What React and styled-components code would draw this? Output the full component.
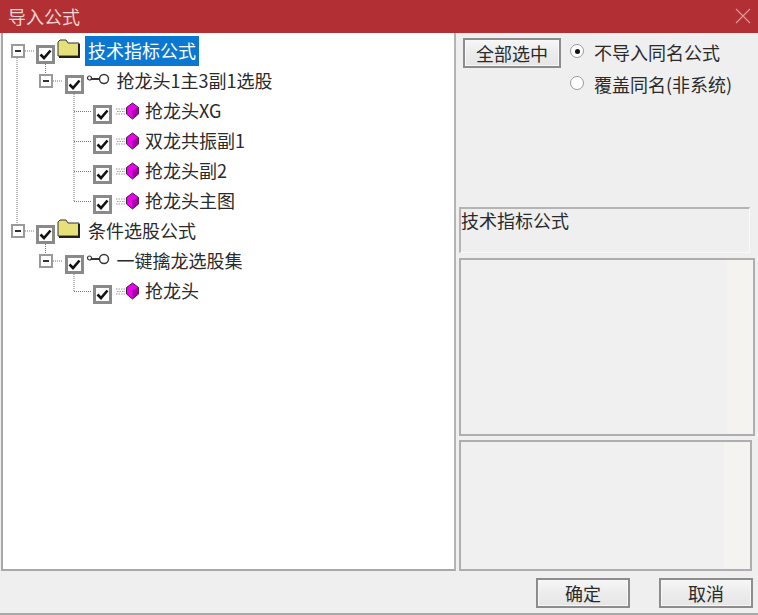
import React from "react";
import styled, { createGlobalStyle } from "styled-components";

const Global = createGlobalStyle`
  html, body { margin: 0; padding: 0; background: #efefef; }
  body { font-family: "Noto Sans CJK SC", "Liberation Sans", sans-serif; }
`;

const Win = styled.div`
  width: 758px; height: 615px; display: flex; flex-direction: column;
  background: #efefef; box-sizing: border-box; overflow: hidden;
  border-bottom: 2px solid #a9a9a9; color: #2a2a2a;
`;
const TitleBar = styled.div`
  height: 33px; flex: none; background: #b22f33; display: flex; align-items: center;
  justify-content: space-between; padding: 0 8px 1px; box-sizing: border-box; color: #f0d4d4; font-size: 18px;
`;
const Main = styled.div`
  flex: none; height: 538px; display: flex; padding-left: 1px;
`;
const Tree = styled.div`
  position: relative; width: 455px; height: 538px; box-sizing: border-box; flex: none;
  background: #fff; border-left: 2px solid #a8a8a8; border-bottom: 2px solid #a8a8a8; border-right: 2px solid #b4b4b4;
  padding-top: 3px;
`;
const Lines = styled.svg`
  position: absolute; left: -3px; top: 0; pointer-events: none;
`;
const Row = styled.div`
  position: relative; height: 30px; display: flex; align-items: center;
  padding-left: ${p => p.$level * 28.5 + 33}px; box-sizing: border-box;
`;
const Expander = styled.span`
  position: absolute; left: ${p => p.$level * 28 + 8}px; top: 8px; width: 14px; height: 14px;
  box-sizing: border-box; border: 2px solid #9a9a9a; background: #fff;
  display: flex; align-items: center; justify-content: center;
  &::after { content: ""; width: 6px; height: 2px; background: #333; }
`;
const Check = styled.span`
  flex: none; width: 19px; height: 19px; margin-top: 7px; box-sizing: border-box;
  border: 3px solid #8a8a8a; background: #fff; display: flex; align-items: center; justify-content: center;
`;
const IconSlot = styled.span`
  flex: none; width: 30px; height: 30px; display: flex; align-items: center; justify-content: center;
`;
const Label = styled.span`
  font-size: 18px; line-height: 28px; height: 30px; padding: 0 3px;
  white-space: nowrap; color: ${p => (p.$sel ? "#fff" : "#2a2a2a")};
  background: ${p => (p.$sel ? "#0a78d0" : "transparent")};
`;
const Side = styled.div`
  flex: 1; display: flex; flex-direction: column; padding: 5px 0 0 3px; min-width: 0;
`;
const Options = styled.div`
  display: flex; height: 169px; flex: none; padding-left: 4px;
`;
const Btn = styled.button`
  box-sizing: border-box; width: ${p => p.$w}px; height: 30px; padding: 0 0 2px;
  font: 18px "Noto Sans CJK SC", sans-serif; color: #2a2a2a; border: 2px solid #8c8c8c;
  background: linear-gradient(#f6f6f6, #ececec 50%, #e6e6e6); box-shadow: inset 0 0 0 1px #f8f8f8;
`;
const Radios = styled.div`
  display: flex; flex-direction: column; gap: 10px; margin-left: 9px;
`;
const RadioRow = styled.div`
  display: flex; align-items: center; height: 22px; margin-top: ${p => (p.$first ? "3px" : "0")};
  font-size: 18px; gap: 10px; white-space: nowrap; line-height: 22px;
`;
const Radio = styled.span`
  width: 14px; height: 14px; border-radius: 50%; border: 1px solid #9a9a9a; box-sizing: border-box;
  background: #fff; display: flex; align-items: center; justify-content: center; flex: none; margin-top: -2px;
  &::after { content: ""; width: 5px; height: 5px; border-radius: 50%; background: ${p => (p.$on ? "#111" : "transparent")}; }
`;
const Group = styled.div`
  width: 291px; height: 46px; box-sizing: border-box; flex: none;
  border-top: 2px solid #b4b4b4; border-left: 2px solid #b4b4b4; border-right: 1px solid #f8f8f8;
  border-bottom: 1px solid #f8f8f8; font-size: 18px; line-height: 23px; white-space: nowrap;
`;
const Panel = styled.div`
  width: ${p => p.$w}px; height: ${p => p.$h}px; margin-top: ${p => p.$t}px; box-sizing: border-box; flex: none;
  border: 2px solid #aeaeae; background: linear-gradient(to right, #f0f0f0 0, #f0f0f0 calc(100% - 26px), #f4f3f0 calc(100% - 26px));
`;
const Footer = styled.div`
  flex: 1; display: flex; justify-content: flex-end; gap: 29px; padding: 7px 5px 0 0;
`;

const CheckMark = () => (
  <svg width="13" height="13" viewBox="0 0 13 13">
    <path d="M1.5 6.5 L5 10 L11.5 2.5" fill="none" stroke="#111" strokeWidth="2.6" />
  </svg>
);
const Folder = () => (
  <svg width="24" height="20" viewBox="0 0 24 20" style={{ marginTop: -4, marginLeft: -3 }}>
    <path d="M1 17 V3 L3 1 H9 L11 4 H22 V17 Z" fill="#e6e07a" stroke="#333" strokeWidth="1" />
    <path d="M22 5 V18 H2" fill="none" stroke="#222" strokeWidth="2" />
  </svg>
);
const KeyIcon = () => (
  <svg width="24" height="14" viewBox="0 0 24 14" style={{ marginTop: -4, marginLeft: -2 }}>
    <circle cx="18" cy="7" r="4.5" fill="#fff" stroke="#333" strokeWidth="1.4" />
    <path d="M13 7 H5" stroke="#333" strokeWidth="2" fill="none" />
    <circle cx="3.5" cy="6" r="2" fill="none" stroke="#333" strokeWidth="1.2" />
  </svg>
);
const Gem = () => (
  <svg width="24" height="18" viewBox="0 0 24 18">
    <path d="M1 7 H10 M2 9.5 H10 M1 12 H10" stroke="#999" strokeWidth="1" strokeDasharray="1.5 1" />
    <path d="M17.5 1 L23.5 5.5 V12 L17.5 17 L11.5 12 V5.5 Z" fill="#ee00ee" stroke="#402040" strokeWidth="1" />
    <path d="M17.5 8 V17 L23.5 12 V5.5 Z" fill="#a000a0" />
  </svg>
);
const CloseIcon = () => (
  <svg width="16" height="16" viewBox="0 0 16 16" style={{ marginRight: -1 }}>
    <path d="M1 1 L15 15 M15 1 L1 15" stroke="#d99a9c" strokeWidth="1.2" />
  </svg>
);

const rows = [
  { level: 0, type: "folder", text: "技术指标公式", sel: true, exp: true },
  { level: 1, type: "key", text: "抢龙头1主3副1选股", exp: true },
  { level: 2, type: "gem", text: "抢龙头XG" },
  { level: 2, type: "gem", text: "双龙共振副1" },
  { level: 2, type: "gem", text: "抢龙头副2" },
  { level: 2, type: "gem", text: "抢龙头主图" },
  { level: 0, type: "folder", text: "条件选股公式", exp: true },
  { level: 1, type: "key", text: "一键擒龙选股集", exp: true },
  { level: 2, type: "gem", text: "抢龙头" },
];

const dots = [
  "M17 25 V191",
  "M45.5 31 V41", "M45.5 211 V221",
  "M74 61 V169", "M74 241 V259",
  "M25 18 H35", "M25 198 H35",
  "M53 48 H63", "M53 228 H63",
  "M74 78.5 H92", "M74 108.5 H92", "M74 138.5 H92", "M74 168.5 H92", "M74 258.5 H92",
];

const icons = { folder: <Folder />, key: <KeyIcon />, gem: <Gem /> };

export default function App() {
  return (
    <Win>
      <Global />
      <TitleBar>
        <span>导入公式</span>
        <CloseIcon />
      </TitleBar>
      <Main>
        <Tree>
          <Lines width="300" height="300">
            {dots.map(d => (
              <path key={d} d={d} stroke="#777" strokeWidth="1" strokeDasharray="1 1" fill="none" />
            ))}
          </Lines>
          {rows.map((r, i) => (
            <Row key={i} $level={r.level}>
              {r.exp && <Expander $level={r.level} />}
              <Check><CheckMark /></Check>
              <IconSlot>{icons[r.type]}</IconSlot>
              <Label $sel={r.sel}>{r.text}</Label>
            </Row>
          ))}
        </Tree>
        <Side>
          <Options>
            <Btn $w={98}>全部选中</Btn>
            <Radios>
              <RadioRow $first><Radio $on />不导入同名公式</RadioRow>
              <RadioRow><Radio />覆盖同名(非系统)</RadioRow>
            </Radios>
          </Options>
          <Group>技术指标公式</Group>
          <Panel $w={296} $h={178} $t={5} />
          <Panel $w={293} $h={131} $t={4} />
        </Side>
      </Main>
      <Footer>
        <Btn $w={94}>确定</Btn>
        <Btn $w={94}>取消</Btn>
      </Footer>
    </Win>
  );
}
